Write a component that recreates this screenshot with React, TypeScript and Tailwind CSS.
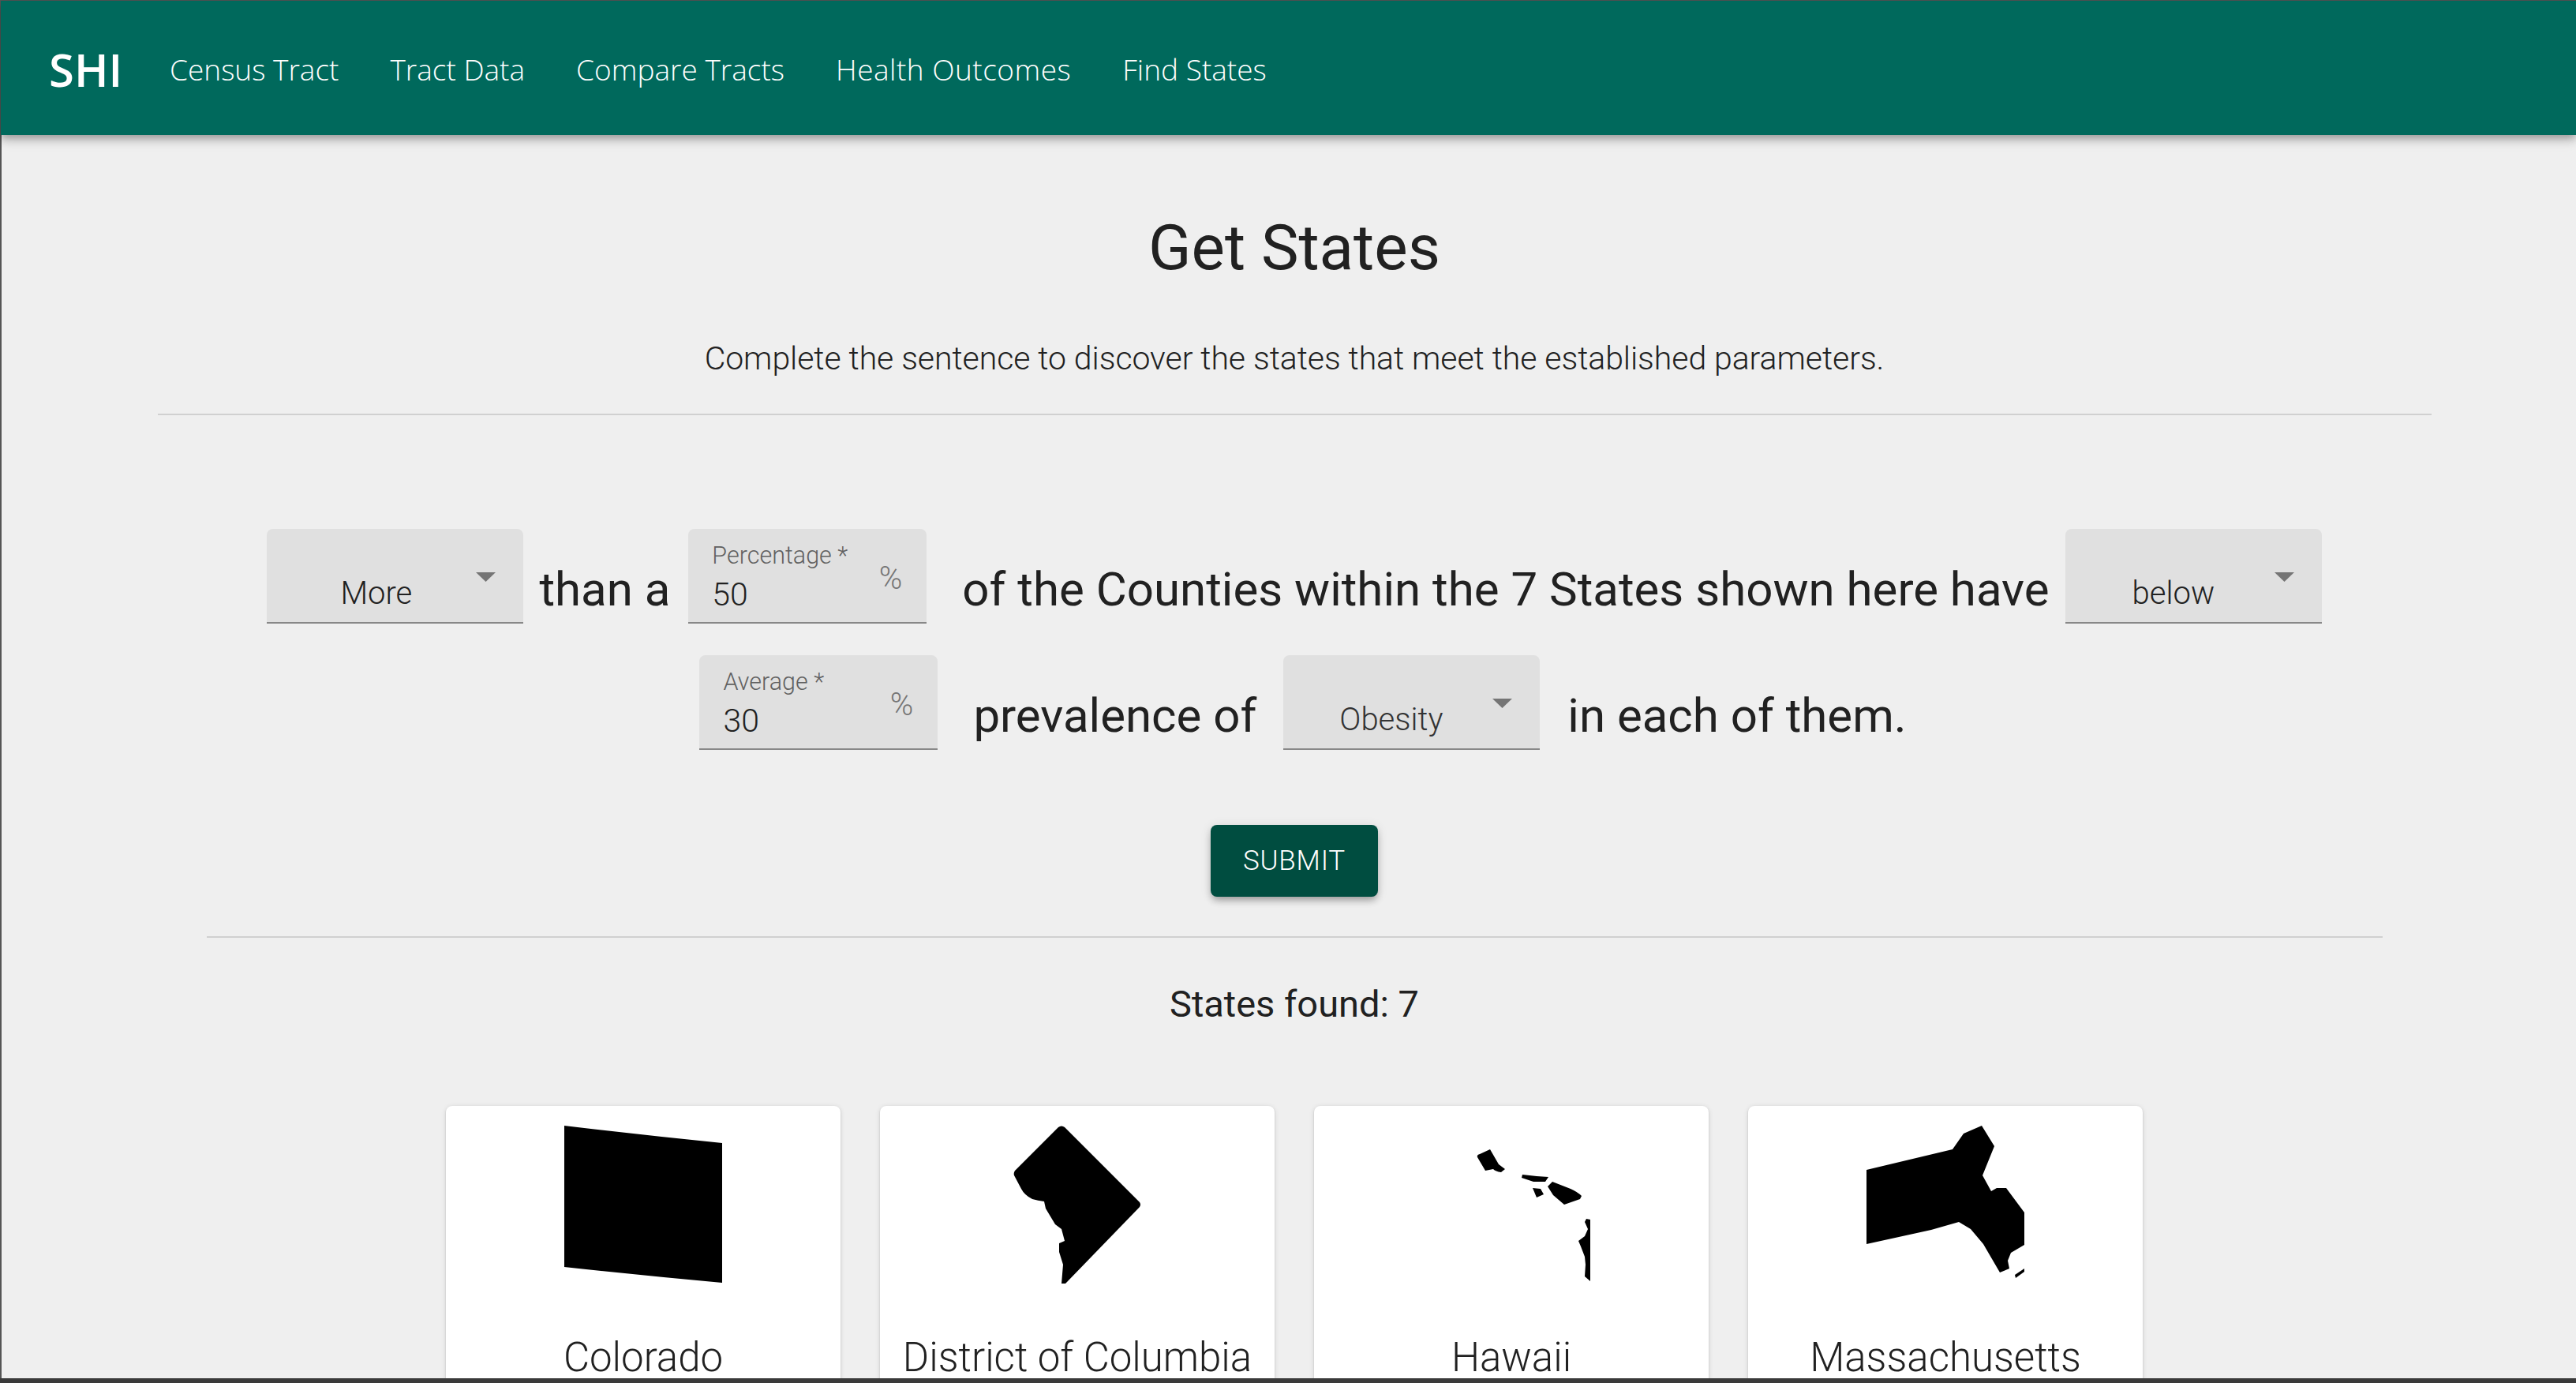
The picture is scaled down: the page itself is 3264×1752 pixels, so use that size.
const links = [
  { label: "Census Tract", cls: "" },
  { label: "Tract Data", cls: "" },
  { label: "Compare Tracts", cls: "" },
  { label: "Health Outcomes", cls: "tracking-[0.5px]" },
  { label: "Find States", cls: "" },
];

function Caret() {
  return (
    <svg className="absolute top-[55px] right-[35px] w-[25px] h-[12px]" viewBox="0 0 25 12">
      <path d="M0 0H25L12.5 12Z" fill="#757575" />
    </svg>
  );
}

function SelectField({ value, textClass, grey }: { value: string; textClass: string; grey?: boolean }) {
  return (
    <div className="relative w-[325px] h-[120px] shrink-0 bg-[#e0e0e0] rounded-t-lg border-b-2 border-[#888888]">
      <span className={`absolute top-[57px] text-[40px] leading-[50px] font-light ${grey ? "text-[#333333]" : "text-[#212121]"} ${textClass}`}>{value}</span>
      <Caret />
    </div>
  );
}

function NumberField({ label, value }: { label: string; value: string }) {
  return (
    <div className="relative w-[302px] h-[120px] shrink-0 bg-[#e0e0e0] rounded-t-lg border-b-2 border-[#888888] font-light">
      <span className="absolute left-[30px] top-[14px] text-[30.5px] leading-[40px] text-[#616161]">{label}</span>
      <span className="absolute left-[30px] top-[58px] text-[41px] leading-[50px] text-[#212121]">{value}</span>
      <span className="absolute right-[31px] top-[43px] text-[40px] leading-[40px] text-[#757575]">%</span>
    </div>
  );
}

function Colorado() {
  return <path d="M0 0Q100 12 200 22V199Q100 190 0 179Z" />;
}
function DC() {
  return <path d="M76 2Q80 -1 84 2L179 97Q181 100 179 103L87 198L85 200H80L82 176L77 160V149L84 146L80 131L72 125L60 105L58 96Q50 95 43 93Q33 88 29 80L20 63Q19 60 21 57Z" />;
}
function Hawaii() {
  return (
    <path d="M57 40Q56 37 60 36L73 30L84 49L92 55L87 59Q80 58 77 55L67 57ZM114 62L132 64L147 65L143 71L128 71L113 66ZM127 79L137 80L141 87L132 91ZM152 71L175 80Q184 84 189 89L187 93L167 100L153 88L146 77ZM200 119L195 118L193 122L197 131L193 140L185 146L188 153L193 166L194 176L193 191L200 197Z" />
  );
}
function Massachusetts() {
  return (
    <path d="M0 56L109 30L123 10L146 0L162 26L147 63L158 83L165 79H177L200 110V151L183 161L179 171L181 181L169 186L148 150L132 131L117 122L82 132L0 150ZM188 189L200 181V185L189 193Z" />
  );
}

const states = [
  { name: "Colorado", Shape: Colorado },
  { name: "District of Columbia", Shape: DC },
  { name: "Hawaii", Shape: Hawaii },
  { name: "Massachusetts", Shape: Massachusetts },
];

export default function App() {
  return (
    <div className="h-[1752px] w-full overflow-hidden flex flex-col bg-[#555555] font-['Roboto',sans-serif] text-[#212121]">
      <nav className="relative z-10 mt-px h-[170px] shrink-0 bg-[#00695c] ml-px flex items-center pl-[61px] shadow-[0_4px_8px_-2px_rgba(0,0,0,0.2),0_8px_10px_0_rgba(0,0,0,0.14),0_2px_20px_0_rgba(0,0,0,0.12)] font-['Open_Sans',sans-serif] text-white">
        <span className="text-[58px] leading-none font-semibold w-[153px] shrink-0 mt-[3px]">SHI</span>
        <div className="flex gap-[65px] text-[37px] font-light mt-[4px]">
          {links.map((l) => (
            <span key={l.label} className={l.cls}>{l.label}</span>
          ))}
        </div>
      </nav>
      <main className="flex-1 min-h-0 bg-[#efefef] ml-[2px] pl-[14px]">
        <h1 className="mt-[96px] text-center text-[80px] leading-[94px] font-normal">Get States</h1>
        <p className="mt-[69px] text-center text-[41px] leading-[48px] font-light tracking-[-0.07px]">Complete the sentence to discover the states that meet the established parameters.</p>
        <div className="mx-auto mt-[46px] w-[2881px] h-[2px] bg-[#d0d0d0]" />

        <div className="mt-[144px] flex justify-center items-center text-[60px] leading-[80px]">
          <SelectField value="More" textClass="left-[93px]" />
          <span className="ml-[20px] mr-[23px] mt-[33px]">than a</span>
          <NumberField label="Percentage *" value="50" />
          <span className="ml-[45px] mr-[20px] mt-[33px]">of the Counties within the 7 States shown here have</span>
          <SelectField value="below" textClass="left-[85px]" />
        </div>
        <div className="mt-[40px] flex justify-center items-center text-[60px] leading-[80px]">
          <div className="ml-[22px] flex items-center">
            <NumberField label="Average *" value="30" />
            <span className="ml-[45px] mr-[34px] mt-[33px]">prevalence of</span>
            <SelectField value="Obesity" textClass="left-[71px]" grey />
            <span className="ml-[35px] mt-[33px]">in each of them.</span>
          </div>
        </div>

        <div className="mt-[95px] flex justify-center">
          <button className="w-[212px] h-[91px] pt-[2px] rounded-lg bg-[#004d40] text-white text-[35px] font-light tracking-[0.8px] shadow-[0_6px_10px_-2px_rgba(0,0,0,0.3),0_2px_14px_0_rgba(0,0,0,0.12)]">SUBMIT</button>
        </div>
        <div className="mx-auto mt-[50px] w-[2757px] h-[2px] bg-[#d0d0d0]" />
        <p className="mt-[56px] text-center text-[47px] leading-[56px] font-normal">States found: 7</p>

        <div className="mt-[101px] flex justify-center gap-[50px]">
          {states.map(({ name, Shape }) => (
            <div key={name} className="w-[500px] h-[460px] shrink-0 bg-white rounded-lg pt-[25px] shadow-[0_2px_2px_-1px_rgba(0,0,0,0.2),0_1px_2px_0_rgba(0,0,0,0.14),0_1px_6px_0_rgba(0,0,0,0.12)] flex flex-col items-center">
              <svg className="w-[200px] h-[200px] shrink-0 overflow-visible" viewBox="0 0 200 200" fill="#000000">
                <Shape />
              </svg>
              <span className="mt-[69px] text-[51px] leading-[50px] font-light whitespace-nowrap">{name}</span>
            </div>
          ))}
        </div>
      </main>
      <div className="relative z-10 h-[6px] shrink-0 bg-[#3a3a3a]" />
    </div>
  );
}
